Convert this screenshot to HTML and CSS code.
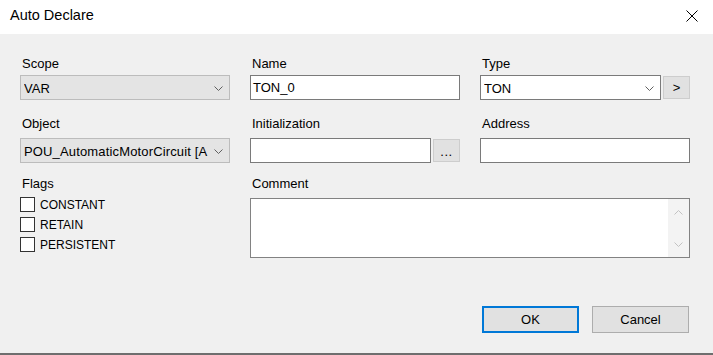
FILE: index.html
```html
<!DOCTYPE html>
<html>
<head>
<meta charset="utf-8">
<link rel="stylesheet" href="styles.css">
</head>
<body>
<div class="window">
  <div class="titlebar">
    <span class="title">Auto Declare</span>
    <svg class="close" width="12" height="12" viewBox="0 0 12 12"><path d="M0.5 0.5 L11.5 11.5 M11.5 0.5 L0.5 11.5" stroke="#000" stroke-width="1" fill="none"/></svg>
  </div>
  <div class="body">
    <div class="row row1">
      <div class="field">
        <div class="label">Scope</div>
        <div class="combo disabled">
          <span class="ctext">VAR</span>
          <svg class="chev" width="9" height="5" viewBox="0 0 9 5"><polyline points="0.5,0.5 4.5,4.5 8.5,0.5" fill="none" stroke="#606060"/></svg>
        </div>
      </div>
      <div class="field">
        <div class="label">Name</div>
        <div class="input"><span class="itext">TON_0</span></div>
      </div>
      <div class="field">
        <div class="label">Type</div>
        <div class="split">
          <div class="combo white">
            <span class="ctext">TON</span>
            <svg class="chev" width="9" height="5" viewBox="0 0 9 5"><polyline points="0.5,0.5 4.5,4.5 8.5,0.5" fill="none" stroke="#606060"/></svg>
          </div>
          <div class="minibtn">&gt;</div>
        </div>
      </div>
    </div>
    <div class="row row2">
      <div class="field">
        <div class="label">Object</div>
        <div class="combo disabled">
          <span class="ctext spaced">POU_AutomaticMotorCircuit [A</span>
          <svg class="chev" width="9" height="5" viewBox="0 0 9 5"><polyline points="0.5,0.5 4.5,4.5 8.5,0.5" fill="none" stroke="#606060"/></svg>
        </div>
      </div>
      <div class="field">
        <div class="label">Initialization</div>
        <div class="split">
          <div class="input"></div>
          <div class="minibtn dots">...</div>
        </div>
      </div>
      <div class="field">
        <div class="label">Address</div>
        <div class="input"></div>
      </div>
    </div>
    <div class="row row3">
      <div class="field">
        <div class="label">Flags</div>
        <div class="checks">
          <div class="check"><span class="box"></span><span class="ctl">CONSTANT</span></div>
          <div class="check"><span class="box"></span><span class="ctl">RETAIN</span></div>
          <div class="check"><span class="box"></span><span class="ctl">PERSISTENT</span></div>
        </div>
      </div>
      <div class="field wide">
        <div class="label">Comment</div>
        <div class="textarea">
          <div class="ta-content"></div>
          <div class="scroll">
            <svg width="9" height="5" viewBox="0 0 9 5"><polyline points="0.5,4.5 4.5,0.5 8.5,4.5" fill="none" stroke="#c2c2c2"/></svg>
            <svg width="9" height="5" viewBox="0 0 9 5"><polyline points="0.5,0.5 4.5,4.5 8.5,0.5" fill="none" stroke="#c2c2c2"/></svg>
          </div>
        </div>
      </div>
    </div>
    <div class="footer">
      <div class="btn default">OK</div>
      <div class="btn">Cancel</div>
    </div>
  </div>
</div>
</body>
</html>
```

FILE: styles.css
```css
* { box-sizing: border-box; }
html, body { margin: 0; padding: 0; }
body {
  width: 713px;
  height: 355px;
  overflow: hidden;
  font-family: "Liberation Sans", Arial, sans-serif;
  font-size: 13px;
  color: #000;
  background: #f0f0f0;
}
.window {
  width: 713px;
  height: 355px;
  display: flex;
  flex-direction: column;
  border-bottom: 2px solid #6e6e6e;
}
.titlebar {
  height: 34px;
  background: #fff;
  display: flex;
  justify-content: space-between;
  align-items: flex-start;
  padding: 0 15px 0 10px;
  flex: none;
}
.title {
  font-size: 14.5px;
  line-height: 30px;
}
.close {
  margin-top: 10px;
  display: block;
}
.body {
  flex: 1;
  background: #f0f0f0;
  display: flex;
  flex-direction: column;
  padding: 22px 0 20px 20px;
}
.row {
  display: grid;
  grid-template-columns: 210px 210px 210px;
  column-gap: 20px;
}
.row2 { margin-top: 16px; }
.row3 { margin-top: 13px; }
.label {
  height: 16px;
  line-height: 16px;
  padding-left: 2px;
  white-space: nowrap;
}
.row1 .label + * { margin-top: 3px; }
.row2 .label + * { margin-top: 6px; }
.row3 .label + .textarea { margin-top: 6px; }
.row3 .label + .checks { margin-top: 5px; }

.combo {
  height: 25px;
  display: flex;
  align-items: center;
  padding-left: 3px;
  border: 1px solid #7a7a7a;
  background: #fff;
  overflow: hidden;
}
.combo.disabled {
  background: #e4e4e4;
  border-color: #bcbcbc;
}
.ctext {
  flex: 1;
  white-space: nowrap;
  overflow: hidden;
  line-height: 23px;
  padding-top: 1px;
}
.ctext.spaced { letter-spacing: 0.15px; }
.chev {
  flex: none;
  margin: 1px 6px 0 3px;
  display: block;
}
.input {
  height: 25px;
  border: 1px solid #7a7a7a;
  background: #fff;
  padding-left: 2px;
  line-height: 23px;
}
.itext { display: block; padding-top: 1px; line-height: 22px; }
.split {
  display: flex;
  align-items: center;
  gap: 2px;
}
.split > .combo, .split > .input { flex: 1; }
.minibtn {
  flex: none;
  width: 27px;
  height: 23px;
  background: #e1e1e1;
  border: 1px solid #cdcdcd;
  text-align: center;
  line-height: 21px;
  font-size: 13px;
}
.minibtn.dots { line-height: 24px; letter-spacing: 0.5px; }

.checks {
  display: flex;
  flex-direction: column;
  gap: 5px;
}
.check {
  display: flex;
  align-items: center;
  height: 15px;
  gap: 5px;
  font-size: 12px;
}
.box {
  width: 15px;
  height: 15px;
  border: 1px solid #333;
  background: #fff;
  flex: none;
}
.ctl { line-height: 15px; padding-top: 1px; }

.field.wide { grid-column: 2 / span 2; }
.textarea {
  height: 60px;
  border: 1px solid #828282;
  background: #fff;
  display: flex;
}
.ta-content { flex: 1; }
.scroll {
  width: 21px;
  background: #f3f3f3;
  display: flex;
  flex-direction: column;
  align-items: center;
  justify-content: space-between;
  padding: 11px 0 10px;
}
.scroll svg { display: block; }

.footer {
  margin-top: auto;
  display: flex;
  justify-content: flex-end;
  gap: 13px;
  padding-right: 24px;
}
.btn {
  width: 97px;
  height: 27px;
  background: #e1e1e1;
  border: 1px solid #adadad;
  text-align: center;
  line-height: 25px;
  font-size: 13px;
}
.btn.default {
  border: 2px solid #0078d7;
  line-height: 23px;
}
```
